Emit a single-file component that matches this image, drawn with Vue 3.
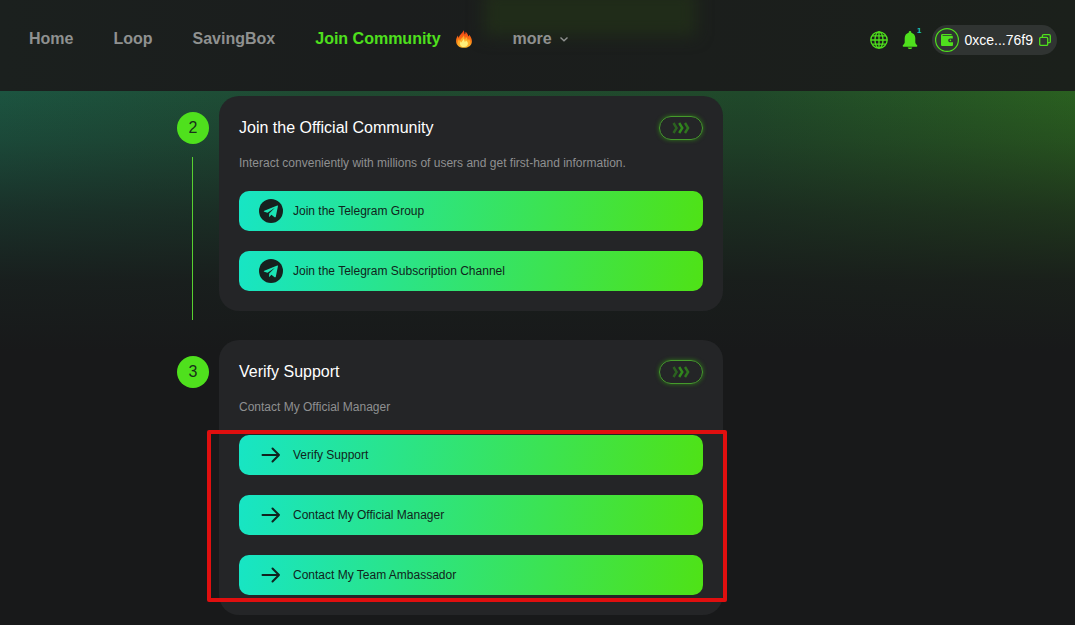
<script setup>
import { ref } from 'vue';

const navItems = ref([
  { label: 'Home', active: false },
  { label: 'Loop', active: false },
  { label: 'SavingBox', active: false },
  { label: 'Join Community', active: true },
]);

const unread = ref(1);
const address = ref('0xce...76f9');

const steps = ref([
  {
    id: 2,
    title: 'Join the Official Community',
    desc: 'Interact conveniently with millions of users and get first-hand information.',
    icon: 'telegram',
    marked: false,
    actions: ['Join the Telegram Group', 'Join the Telegram Subscription Channel'],
  },
  {
    id: 3,
    title: 'Verify Support',
    desc: 'Contact My Official Manager',
    icon: 'arrow',
    marked: true,
    actions: ['Verify Support', 'Contact My Official Manager', 'Contact My Team Ambassador'],
  },
]);
</script>

<template>
  <div class="page">
    <!-- Header -->
    <header class="header">
      <nav class="nav">
        <a v-for="item in navItems" :key="item.label" href="#" class="nav-link" :class="{ active: item.active }">
          {{ item.label }}
          <svg v-if="item.active" class="fire" viewBox="0 0 18 18">
            <defs>
              <linearGradient id="flame" x1="0" y1="0" x2="0" y2="1">
                <stop offset="0" stop-color="#f03c16" />
                <stop offset="0.6" stop-color="#fb7a14" />
                <stop offset="1" stop-color="#ffc02e" />
              </linearGradient>
            </defs>
            <path fill="url(#flame)" d="M8.500.2c1 1.500.6 2.900 1.300 4.200.6-.7.8-1.600.7-2.700 1.700 1.200 2.700 3 2.800 4.900.6-.5.9-1.100.9-1.900 1.700 2 2.800 4.200 2.700 6.800-.2 4-3.400 6.300-7.800 6.300s-7.700-2.200-8-6.300c-.2-2.400.6-4.300 1.900-6 0 1 .2 1.800.8 2.500C4 4.600 7.500 3.700 8.500.2z" />
            <path fill="#ffb02a" d="M8.800 5.200c.8 1.600.3 2.900 1.100 4.100.7-.6 1-1.300 1-2.300 1.300 1 1.800 2.300 1.800 3.600.6-.3 1-.9 1.200-1.500.9 1.100 1.300 2.200 1.200 3.500-.3 3-2.900 4.500-6 4.500-3.300 0-5.800-1.600-6.100-4.500-.1-1.500.3-2.500 1-3.500.2.900.6 1.500 1.200 1.800.1-2.400 3-3 3.600-5.700z" />
            <path fill="#fff07a" d="M8.800 8.600c.5 1.400.3 2.300 1.100 3.300.6-.4.9-.9 1-1.700 1.400 1.200 2.200 2.300 2 3.800-.3 2-1.900 3-3.900 3-2.200 0-3.900-1.100-4-3.100-.1-1.200.2-2 .9-2.700.2.600.5 1 .9 1.200.1-1.600 1.700-1.800 2-3.800z" />
          </svg>
        </a>
        <button type="button" class="nav-more">
          more
          <svg class="chevron" viewBox="0 0 10 10">
            <path d="M1.500 3.500 5 6.800l3.500-3.300" fill="none" stroke="currentColor" stroke-width="1.400" />
          </svg>
        </button>
      </nav>

      <div class="tools">
        <button type="button" class="tool" aria-label="Language">
          <svg viewBox="0 0 18 18" width="18" height="18" fill="none" stroke="currentColor" stroke-width="1.300">
            <circle cx="9" cy="9" r="8.200" />
            <ellipse cx="9" cy="9" rx="4" ry="8.200" />
            <path d="M9 .8v16.400M.8 9h16.400M2.200 4.800h13.600M2.200 13.200h13.600" />
          </svg>
        </button>
        <button type="button" class="tool bell" aria-label="Notifications">
          <svg viewBox="0 0 16 18" width="16" height="18" fill="currentColor">
            <path d="M8 0a1.300 1.300 0 0 1 1.300 1.300v.4c2.400.6 4 2.600 4 5.300v4.200c0 1 .6 1.700 1.400 2.500.4.400.6.700.6 1.200 0 .5-.3.800-.8.800h-13c-.5 0-.8-.3-.8-.8 0-.5.2-.8.600-1.200.8-.8 1.400-1.500 1.400-2.500V7c0-2.700 1.600-4.700 4-5.300v-.4A1.300 1.300 0 0 1 8 0z" />
            <path d="M5.700 16.500h4.600c-.3 1-1.200 1.500-2.300 1.500s-2-.5-2.300-1.500z" />
          </svg>
          <span class="badge">{{ unread }}</span>
        </button>
        <button type="button" class="wallet">
          <svg viewBox="0 0 24 24" width="24" height="24">
            <circle cx="12" cy="12" r="11.400" fill="none" stroke="currentColor" stroke-width="1.200" />
            <path fill="currentColor" d="M6 7.500C6 6.500 6.600 6 7.500 6h8.300c.6 0 1 .4 1 1H7.600v.7h9.200c.7 0 1 .4 1 1v1.800h-2.500c-1.300 0-2.100.8-2.100 1.900s.8 1.900 2.100 1.900H18v2.200c0 1-.5 1.500-1.500 1.500h-9C6.500 18 6 17.500 6 16.500z" />
            <circle cx="15.400" cy="12.400" r=".8" fill="currentColor" />
          </svg>
          <span class="address">{{ address }}</span>
          <svg viewBox="0 0 12 12" width="12" height="12" fill="none" stroke="currentColor" stroke-width="1.300">
            <rect x=".7" y="3.400" width="8" height="8" rx="1.200" />
            <path d="M3.400 3.200V1.900c0-.8.400-1.200 1.200-1.200h5.500c.8 0 1.200.4 1.200 1.200v5.500c0 .8-.4 1.200-1.200 1.200H8.800" />
          </svg>
        </button>
      </div>
    </header>

    <!-- Steps -->
    <main class="content">
      <section v-for="step in steps" :key="step.id" class="step">
        <div class="rail">
          <div class="number">{{ step.id }}</div>
          <div class="line"></div>
        </div>
        <div class="card">
          <div class="card-head">
            <h2 class="card-title">{{ step.title }}</h2>
            <button type="button" class="expand" aria-label="Open">
              <svg viewBox="0 0 18 12" width="18" height="12" fill="none" stroke="currentColor" stroke-width="2.400">
                <path d="M1.500 1 4.600 6 1.500 11" opacity=".6" />
                <path d="M7.200 1l3.100 5-3.100 5" />
                <path d="M13 1l3.100 5-3.100 5" opacity=".8" />
              </svg>
            </button>
          </div>
          <p class="card-desc">{{ step.desc }}</p>
          <div class="actions" :class="{ marked: step.marked }">
            <a v-for="action in step.actions" :key="action" href="#" class="action">
              <svg v-if="step.icon === 'telegram'" viewBox="0 0 24 24" width="24" height="24">
                <circle cx="12" cy="12" r="12" fill="#16211f" />
                <path fill="#1be3b4" d="M18.300 6.600 5.300 11.700c-.7.300-.7.800 0 1l3.200 1 7.400-5-5.700 5.700-.2 3.400c.4 0 .6-.2.800-.4l1.600-1.600 3.200 2.400c.6.300 1 .2 1.200-.5l2.100-10.200c.2-.8-.1-1.100-.6-.9z" />
              </svg>
              <svg v-else viewBox="0 0 24 24" width="24" height="24" fill="none" stroke="#0f2420" stroke-width="2">
                <path d="M3.500 12h16.500M13.500 5.500 20 12l-6.500 6.500" stroke-linecap="round" stroke-linejoin="round" />
              </svg>
              {{ action }}
            </a>
          </div>
        </div>
      </section>
    </main>
  </div>
</template>

<style>
body {
  margin: 0;
  background: #18191a;
}
</style>

<style scoped>
.page {
  min-height: 100vh;
  font-family: "Liberation Sans", Arial, sans-serif;
  color: #fff;
  background: #18191a;
}

a {
  text-decoration: none;
}

button {
  padding: 0;
  border: none;
  background: none;
  font-family: inherit;
  cursor: pointer;
}

svg {
  display: block;
  flex-shrink: 0;
}

.header {
  position: relative;
  display: flex;
  justify-content: space-between;
  align-items: flex-start;
  box-sizing: border-box;
  min-height: 91px;
  padding: 25px 18px 0 29px;
  overflow: hidden;
  background: linear-gradient(90deg, #1b201e, #1b1d1d 35%, #1b1e1c 65%, #1b201b);
}

.header::before {
  content: "";
  position: absolute;
  top: -10px;
  left: 484px;
  width: 212px;
  height: 46px;
  background: #202c19;
  filter: blur(8px);
}

.nav {
  position: relative;
  display: flex;
  align-items: center;
  gap: 40px;
}

.nav-link,
.nav-more {
  display: flex;
  align-items: center;
  font-size: 16px;
  font-weight: bold;
  line-height: 28px;
  color: #8f9190;
}

.nav-more {
  gap: 7px;
}

.nav-link.active {
  gap: 14px;
  color: #4fe01d;
}

.fire {
  width: 18px;
  height: 18px;
}

.chevron {
  width: 10px;
  height: 10px;
}

.tools {
  display: flex;
  align-items: center;
  gap: 14px;
  color: #4fe01d;
}

.tool {
  color: inherit;
}

.bell {
  position: relative;
}

.badge {
  position: absolute;
  top: -4px;
  right: -4px;
  font-size: 8px;
  line-height: 8px;
  font-weight: bold;
  color: #17c9bd;
}

.wallet {
  display: flex;
  align-items: center;
  gap: 6px;
  height: 30px;
  padding: 0 6px 0 3px;
  border-radius: 15px;
  background: #303432;
  color: #4fe01d;
}

.address {
  font-size: 14px;
  color: #fff;
}

.content {
  box-sizing: border-box;
  min-height: calc(100vh - 91px);
  padding: 5px 16px 10px 177px;
  background:
    linear-gradient(180deg, rgba(24, 25, 26, 0) 0, rgba(24, 25, 26, 0.2) 50px, rgba(24, 25, 26, 0.6) 120px, rgba(24, 25, 26, 0.9) 190px, #18191a 260px),
    linear-gradient(90deg, #1c5440, #1f4a31 30%, #20492a 70%, #2a6020);
}

.step {
  display: flex;
  gap: 10px;
  max-width: 546px;
  padding-bottom: 29px;
}

.step:last-child {
  padding-bottom: 0;
}

.rail {
  display: flex;
  flex-direction: column;
  gap: 13px;
  padding-top: 16px;
  margin-bottom: -9px;
}

.number {
  width: 32px;
  height: 32px;
  border-radius: 50%;
  background: #4fe01d;
  color: #18301a;
  font-size: 16px;
  line-height: 32px;
  text-align: center;
}

.line {
  flex: 1;
  width: 1px;
  margin-left: 15px;
  background: #58d030;
}

.step:last-child .line {
  display: none;
}

.card {
  flex: 1;
  min-width: 0;
  padding: 20px;
  border-radius: 20px;
  background: #242527;
}

.card-head {
  display: flex;
  justify-content: space-between;
  align-items: center;
}

.card-title {
  margin: 0;
  font-size: 16px;
  font-weight: normal;
  line-height: 24px;
}

.expand {
  display: flex;
  align-items: center;
  justify-content: center;
  width: 44px;
  height: 24px;
  border: 1px solid #459a2c;
  border-radius: 12px;
  box-shadow: 0 0 4px #2f7a18;
  color: #318a1c;
}

.card-desc {
  margin: 15px 0 20px;
  font-size: 12px;
  line-height: 16px;
  color: #8f9091;
}

.actions {
  position: relative;
  display: flex;
  flex-direction: column;
  gap: 20px;
}

/* red frame around the highlighted group */
.actions.marked::before {
  content: "";
  position: absolute;
  inset: -5px -24px -7px -32px;
  border: 4px solid #e00f0f;
  border-radius: 2px;
  pointer-events: none;
}

.action {
  display: flex;
  align-items: center;
  gap: 10px;
  height: 40px;
  padding: 0 20px;
  border-radius: 10px;
  background: linear-gradient(100deg, #17e5c5, #4fe216);
  color: #10241c;
  font-size: 12px;
}
</style>
